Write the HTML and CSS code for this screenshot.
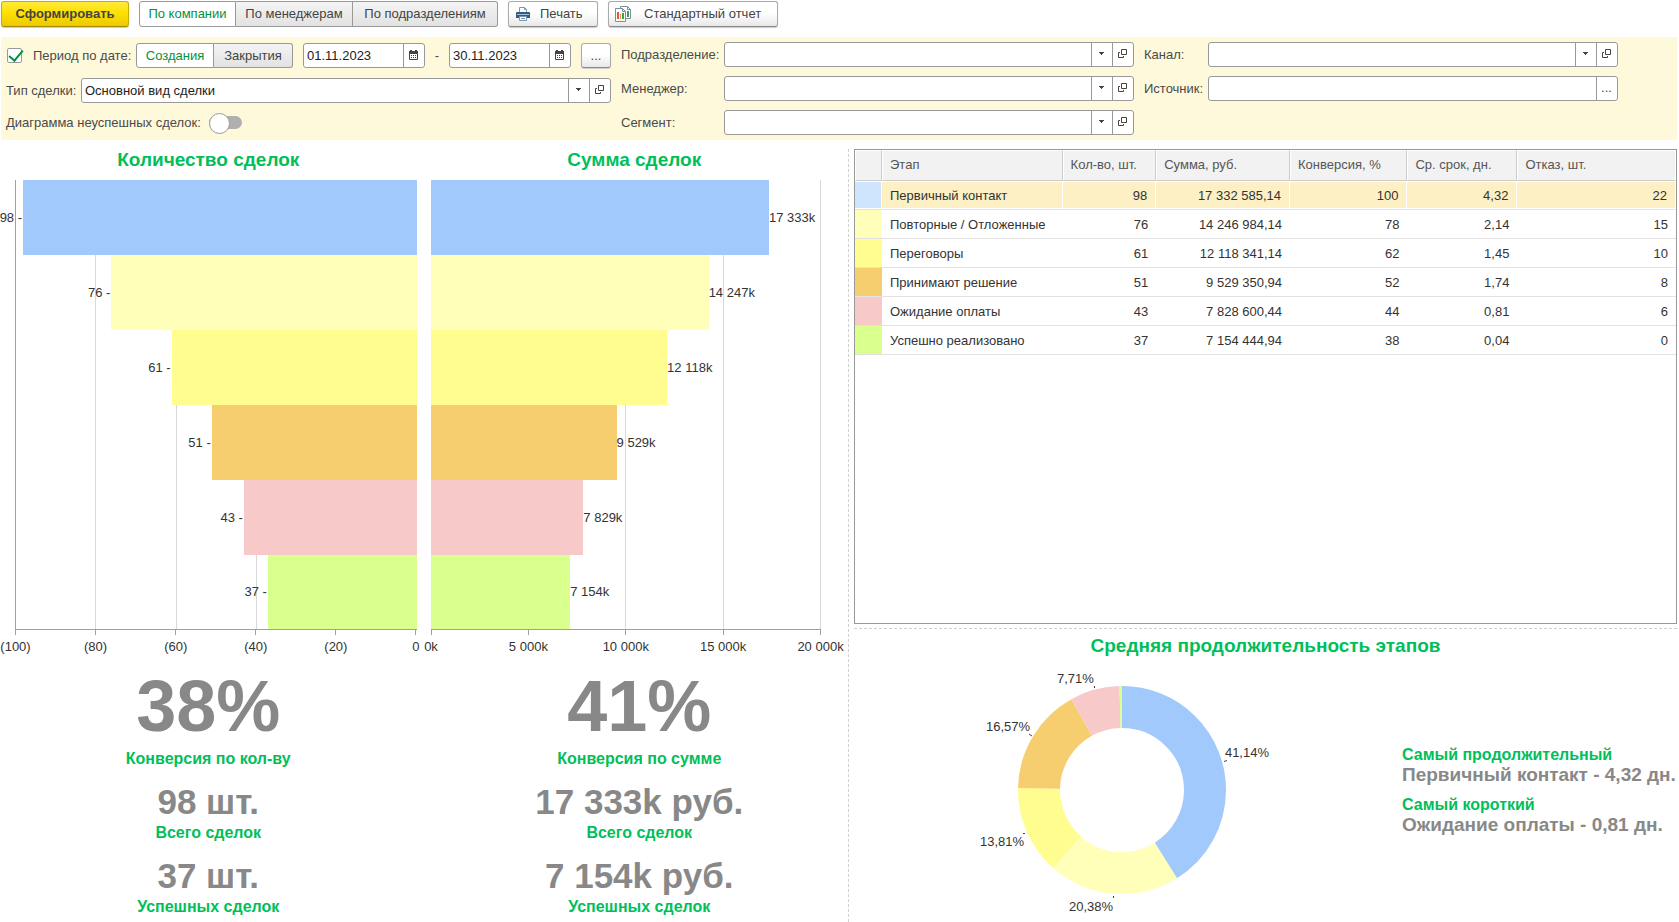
FILE: index.html
```html
<!DOCTYPE html>
<html lang="ru">
<head>
<meta charset="utf-8">
<title>Воронка продаж</title>
<link rel="stylesheet" href="styles.css">
</head>
<body>
<svg class="defs" aria-hidden="true">
  <symbol id="i-down" viewBox="0 0 5 3"><path d="M0 0h5v1h-1v1h-1v1h-1v-1h-1v-1h-1z" fill="#444"/></symbol>
  <symbol id="i-open" viewBox="0 0 9 9"><path d="M3.500 .5h5v5h-5zM2 3.500H.5v5h5V7" fill="none" stroke="#444"/></symbol>
  <symbol id="i-cal" viewBox="0 0 9 10"><path d="M.5 2v7.500h8V2" fill="none" stroke="#444"/><path d="M0 1h9v3H0zM1 0h2v1H1zM6 0h2v1H6zM2 5h1v1H2zM4 5h1v1H4zM6 5h1v1H6zM2 7h1v1H2zM4 7h1v1H4zM6 7h1v1H6z" fill="#444"/></symbol>
</svg>
<header class="toolbar">
  <button class="btn btn-primary" type="button">Сформировать</button>
  <div class="segments" role="group" aria-label="Разрез отчета">
    <button class="seg seg-on seg-company" type="button" aria-pressed="true">По компании</button>
    <button class="seg seg-managers" type="button" aria-pressed="false">По менеджерам</button>
    <button class="seg seg-units" type="button" aria-pressed="false">По подразделениям</button>
  </div>
  <button class="btn btn-print" type="button">
    <svg width="14" height="14" viewBox="0 0 14 14" aria-hidden="true"><path d="M3.500 5V.5h5l2 2V5" fill="#fff" stroke="#7d97b0"/><path d="M8.500 .5v2h2" fill="none" stroke="#7d97b0"/><path d="M1 5h12q1 0 1 1v5H0V6q0-1 1-1z" fill="#2f5b87"/><path d="M1 7h12v1H1z" fill="#a9c0d6"/><path d="M3.500 9.500h7v4h-7z" fill="#fff" stroke="#7d97b0"/><path d="M5 11h4v1H5z" fill="#7d97b0"/></svg>
    Печать
  </button>
  <button class="btn btn-report" type="button">
    <svg width="16" height="16" viewBox="0 0 16 16" aria-hidden="true"><path d="M5.500 .5h7l3 3v9h-10z" fill="#fff" stroke="#7c8f9d"/><path d="M12.500 .5v3h3" fill="none" stroke="#7c8f9d"/><path d="M12 5h2v6h-2z" fill="#3ca04c"/><path d="M.5 2.500h7l3 3v10H.5z" fill="#fff" stroke="#7c8f9d"/><path d="M7.500 2.500v3h3" fill="none" stroke="#7c8f9d"/><path d="M2 6h2v7H2z" fill="#d9534a"/><path d="M5 8h1v5H5z" fill="#e8923c"/><path d="M7 7h2v6H7z" fill="#3ca04c"/></svg>
    Стандартный отчет
  </button>
</header>

<form class="filters">
  <div class="filters-main">
    <div class="row">
      <input class="check" type="checkbox" id="period" checked>
      <label class="period-label" for="period">Период по дате:</label>
      <div class="segments" role="group" aria-label="Дата">
        <button class="seg seg-on seg-created" type="button" aria-pressed="true">Создания</button>
        <button class="seg seg-closed" type="button" aria-pressed="false">Закрытия</button>
      </div>
      <div class="field field-date">
        <input type="text" value="01.11.2023" aria-label="Начало периода">
        <button type="button" aria-label="Календарь"><svg width="9" height="10"><use href="#i-cal"/></svg></button>
      </div>
      <span class="dash">-</span>
      <div class="field field-date">
        <input type="text" value="30.11.2023" aria-label="Конец периода">
        <button type="button" aria-label="Календарь"><svg width="9" height="10"><use href="#i-cal"/></svg></button>
      </div>
      <button class="btn btn-more" type="button" aria-label="Выбрать период">...</button>
    </div>
    <div class="row">
      <label class="type-label" for="type">Тип сделки:</label>
      <div class="field">
        <input type="text" id="type" value="Основной вид сделки">
        <button type="button" aria-label="Список"><svg width="5" height="3"><use href="#i-down"/></svg></button>
        <button type="button" aria-label="Открыть"><svg width="9" height="9"><use href="#i-open"/></svg></button>
      </div>
    </div>
    <div class="row row-switch">
      <label for="failed">Диаграмма неуспешных сделок:</label>
      <input class="switch" type="checkbox" role="switch" id="failed">
    </div>
  </div>
  <div class="filters-side filters-org">
    <label for="unit">Подразделение:</label>
    <div class="field">
      <input type="text" id="unit">
      <button type="button" aria-label="Список"><svg width="5" height="3"><use href="#i-down"/></svg></button>
      <button type="button" aria-label="Открыть"><svg width="9" height="9"><use href="#i-open"/></svg></button>
    </div>
    <label for="manager">Менеджер:</label>
    <div class="field">
      <input type="text" id="manager">
      <button type="button" aria-label="Список"><svg width="5" height="3"><use href="#i-down"/></svg></button>
      <button type="button" aria-label="Открыть"><svg width="9" height="9"><use href="#i-open"/></svg></button>
    </div>
    <label for="segment">Сегмент:</label>
    <div class="field">
      <input type="text" id="segment">
      <button type="button" aria-label="Список"><svg width="5" height="3"><use href="#i-down"/></svg></button>
      <button type="button" aria-label="Открыть"><svg width="9" height="9"><use href="#i-open"/></svg></button>
    </div>
  </div>
  <div class="filters-side filters-source">
    <label for="channel">Канал:</label>
    <div class="field">
      <input type="text" id="channel">
      <button type="button" aria-label="Список"><svg width="5" height="3"><use href="#i-down"/></svg></button>
      <button type="button" aria-label="Открыть"><svg width="9" height="9"><use href="#i-open"/></svg></button>
    </div>
    <label for="source">Источник:</label>
    <div class="field">
      <input type="text" id="source">
      <button type="button" aria-label="Выбрать">...</button>
    </div>
  </div>
</form>

<main class="report">
  <section class="funnels">
    <div class="funnel funnel-count">
      <h2 class="title">Количество сделок</h2>
      <div class="plot">
        <div class="grid"><i></i><i></i><i></i><i></i><i></i></div>
        <div class="bar-row"><span>98 -</span><b class="bar c-blue" style="width:98%"></b></div>
        <div class="bar-row"><span>76 -</span><b class="bar c-cream" style="width:76%"></b></div>
        <div class="bar-row"><span>61 -</span><b class="bar c-yellow" style="width:61%"></b></div>
        <div class="bar-row"><span>51 -</span><b class="bar c-orange" style="width:51%"></b></div>
        <div class="bar-row"><span>43 -</span><b class="bar c-pink" style="width:43%"></b></div>
        <div class="bar-row"><span>37 -</span><b class="bar c-green" style="width:37%"></b></div>
      </div>
      <div class="axis"><span>(100)</span><span>(80)</span><span>(60)</span><span>(40)</span><span>(20)</span><span>0</span></div>
      <dl class="kpis">
        <div class="kpi kpi-big"><dd>38%</dd><dt>Конверсия по кол-ву</dt></div>
        <div class="kpi"><dd>98 шт.</dd><dt>Всего сделок</dt></div>
        <div class="kpi"><dd>37 шт.</dd><dt>Успешных сделок</dt></div>
      </dl>
    </div>
    <div class="funnel funnel-sum">
      <h2 class="title">Сумма сделок</h2>
      <div class="plot">
        <div class="grid"><i></i><i></i><i></i><i></i></div>
        <div class="bar-row"><b class="bar c-blue" style="width:86.66%"></b><span>17 333k</span></div>
        <div class="bar-row"><b class="bar c-cream" style="width:71.23%"></b><span>14 247k</span></div>
        <div class="bar-row"><b class="bar c-yellow" style="width:60.59%"></b><span>12 118k</span></div>
        <div class="bar-row"><b class="bar c-orange" style="width:47.65%"></b><span>9 529k</span></div>
        <div class="bar-row"><b class="bar c-pink" style="width:39.14%"></b><span>7 829k</span></div>
        <div class="bar-row"><b class="bar c-green" style="width:35.77%"></b><span>7 154k</span></div>
      </div>
      <div class="axis"><span>0k</span><span>5 000k</span><span>10 000k</span><span>15 000k</span><span>20 000k</span></div>
      <dl class="kpis">
        <div class="kpi kpi-big"><dd>41%</dd><dt>Конверсия по сумме</dt></div>
        <div class="kpi"><dd>17 333k руб.</dd><dt>Всего сделок</dt></div>
        <div class="kpi"><dd>7 154k руб.</dd><dt>Успешных сделок</dt></div>
      </dl>
    </div>
  </section>

  <section class="details">
    <div class="table-box">
      <table class="stages">
        <colgroup><col class="w-mark"><col class="w-stage"><col class="w-count"><col class="w-sum"><col class="w-conv"><col class="w-term"><col></colgroup>
        <thead>
          <tr><th></th><th>Этап</th><th>Кол-во, шт.</th><th>Сумма, руб.</th><th>Конверсия, %</th><th>Ср. срок, дн.</th><th>Отказ, шт.</th></tr>
        </thead>
        <tbody>
          <tr class="current"><td class="c-blue"></td><td>Первичный контакт</td><td>98</td><td>17 332 585,14</td><td>100</td><td>4,32</td><td>22</td></tr>
          <tr><td class="c-cream"></td><td>Повторные / Отложенные</td><td>76</td><td>14 246 984,14</td><td>78</td><td>2,14</td><td>15</td></tr>
          <tr><td class="c-yellow"></td><td>Переговоры</td><td>61</td><td>12 118 341,14</td><td>62</td><td>1,45</td><td>10</td></tr>
          <tr><td class="c-orange"></td><td>Принимают решение</td><td>51</td><td>9 529 350,94</td><td>52</td><td>1,74</td><td>8</td></tr>
          <tr><td class="c-pink"></td><td>Ожидание оплаты</td><td>43</td><td>7 828 600,44</td><td>44</td><td>0,81</td><td>6</td></tr>
          <tr><td class="c-green"></td><td>Успешно реализовано</td><td>37</td><td>7 154 444,94</td><td>38</td><td>0,04</td><td>0</td></tr>
        </tbody>
      </table>
    </div>
    <div class="duration">
      <h2 class="title">Средняя продолжительность этапов</h2>
      <div class="duration-body">
        <div class="donut">
          <svg width="300" height="250" viewBox="0 0 300 250" role="img" aria-label="Доли этапов">
            <g fill="none" stroke-width="42" transform="rotate(-90 150 124)">
              <circle cx="150" cy="124" r="83" pathLength="100" stroke="#a2c9fb" stroke-dasharray="41.14 100"/>
              <circle cx="150" cy="124" r="83" pathLength="100" stroke="#ffffba" stroke-dasharray="20.38 100" stroke-dashoffset="-41.14"/>
              <circle cx="150" cy="124" r="83" pathLength="100" stroke="#fffd8f" stroke-dasharray="13.81 100" stroke-dashoffset="-61.52"/>
              <circle cx="150" cy="124" r="83" pathLength="100" stroke="#f7ce6f" stroke-dasharray="16.57 100" stroke-dashoffset="-75.33"/>
              <circle cx="150" cy="124" r="83" pathLength="100" stroke="#f7c9c9" stroke-dasharray="7.71 100" stroke-dashoffset="-91.9"/>
              <circle cx="150" cy="124" r="83" pathLength="100" stroke="#d9ff8c" stroke-dasharray="0.39 100" stroke-dashoffset="-99.61"/>
            </g>
            <path d="M122.500 20v2M57 68l3 2M51 167.500h2M141.500 230v2M252 95.500l3-1" fill="none" stroke="#444"/>
            <g class="donut-text">
              <text x="297" y="91" text-anchor="end">41,14%</text>
              <text x="97" y="245">20,38%</text>
              <text x="8" y="180">13,81%</text>
              <text x="14" y="65">16,57%</text>
              <text x="85" y="17">7,71%</text>
            </g>
          </svg>
        </div>
        <dl class="notes">
          <div><dt>Самый продолжительный</dt><dd>Первичный контакт - 4,32 дн.</dd></div>
          <div><dt>Самый короткий</dt><dd>Ожидание оплаты - 0,81 дн.</dd></div>
        </dl>
      </div>
    </div>
  </section>
</main>
</body>
</html>
```
FILE: styles.css
```css
* { box-sizing: border-box; }
body { margin: 0; min-height: 100vh; display: flex; flex-direction: column; background: #fff; color: #333; font: 13px/16px "Liberation Sans", Arial, sans-serif; }
button, input { font: inherit; color: inherit; margin: 0; }
.defs { display: none; }
h2, dl, dd { margin: 0; }

.toolbar { display: flex; gap: 10px; padding: 1px 1px 10px; color: #444; }
.btn { height: 26px; display: flex; align-items: center; justify-content: center; padding: 0; border: 1px solid #aaa; border-bottom-color: #888; border-radius: 3px; background: linear-gradient(#fff, #fff 45%, #e8e8e8); box-shadow: 0 1px 1px #ccc; }
.btn-primary { width: 128px; font-weight: bold; background: linear-gradient(#ffea3c, #ffe000 45%, #ecc900); border-color: #c8ac00; border-bottom-color: #a08900; }
.btn-print { width: 90px; gap: 10px; padding-left: 7px; justify-content: flex-start; }
.btn-report { width: 170px; gap: 13px; padding-left: 6px; justify-content: flex-start; }
.btn-more { width: 30px; height: 25px; }
.segments { display: flex; }
.seg { height: 25px; padding: 0; border: 1px solid #999; border-left-width: 0; background: linear-gradient(#f4f4f4, #e2e2e2); color: #444; }
.seg:first-child { border-left-width: 1px; border-radius: 3px 0 0 3px; }
.seg:last-child { border-radius: 0 3px 3px 0; }
.seg.seg-on { background: #fff; color: #00913f; }
.toolbar .seg { height: 26px; }
.seg-company { width: 97px; }
.seg-managers { width: 117px; }
.seg-units { width: 145px; }
.seg-created { width: 78px; }
.seg-closed { width: 79px; }

.filters { display: grid; grid-template-columns: 605fr 513fr 474fr; gap: 10px; margin: 0 2px 0 1px; padding: 5px 59px 5px 5px; background: #fef9da; color: #4a4a4a; }
.filters-main { display: flex; flex-direction: column; gap: 10px; padding-top: 1px; }
.row { display: flex; align-items: center; }
.filters-side { display: grid; grid-auto-rows: 25px; row-gap: 9px; align-items: center; align-content: start; }
.filters-org { grid-template-columns: 103px 1fr; }
.filters-source { grid-template-columns: 64px 1fr; }
.field { flex: 1; display: flex; height: 25px; border: 1px solid #999; border-radius: 3px; background: #fff; overflow: hidden; }
.field input { flex: 1; min-width: 0; width: 0; padding: 0 3px; border: 0; background: none; color: #222; outline: 0; font-size: 13px; }
.field button { width: 21px; padding: 0 1px 2px 0; border: 0; border-left: 1px solid #999; background: none; display: flex; align-items: center; justify-content: center; }
.field-date { flex: none; width: 122px; }
.check { appearance: none; width: 15px; height: 15px; margin-left: 1px; border: 1px solid #999; border-radius: 2px; background: #fff; position: relative; }
.check:checked::after { content: ""; position: absolute; left: 4px; top: -2px; width: 6px; height: 12px; border: solid #00913f; border-width: 0 2px 2px 0; transform: rotate(40deg); }
.period-label { width: 103px; margin-left: 11px; }
.row .segments { margin-right: 10px; }
.dash { width: 24px; text-align: center; }
.row .btn-more { margin-left: auto; }
.type-label { width: 75px; }
.row-switch { height: 19px; gap: 8px; }
.switch { appearance: none; position: relative; width: 33px; height: 13px; border-radius: 7px; background: #b0b0b0; }
.switch::before { content: ""; position: absolute; left: 0; top: -3px; width: 19px; height: 19px; border: 1px solid #999; border-radius: 50%; background: #fff; }

.report { flex: 1; display: grid; grid-template-columns: 849fr 830fr; }
.title { color: #00bf5a; font-size: 19px; line-height: 22px; text-align: center; }
.funnels { display: grid; grid-template-columns: 1fr 1fr; gap: 13px; margin-top: 9px; border-right: 1px dashed #d0d0d0; }
.funnel-count { padding-right: 1px; }
.funnel-count .plot, .funnel-count .axis { margin-left: 15px; }
.funnel-sum .plot, .funnel-sum .axis { margin-right: 27px; }
.funnel-sum .title { padding-right: 10px; }
.plot { position: relative; margin-top: 9px; border-bottom: 1px solid #a0a0a0; }
.grid { position: absolute; inset: 0; display: flex; }
.grid i { flex: 1; border-left: 1px solid #d8d8d8; }
.funnel-count .grid i:first-child { border-color: #a0a0a0; }
.funnel-sum .grid { border-right: 1px solid #d8d8d8; }
.bar-row { position: relative; display: flex; align-items: center; height: 75px; white-space: nowrap; }
.bar-row:last-child { height: 74px; }
.bar-row span { flex: none; }
.bar { flex: none; height: 100%; }
.funnel-count .bar-row { justify-content: flex-end; gap: 1px; }
.axis { display: flex; justify-content: space-between; }
.axis span { width: 1px; display: flex; flex-direction: column; align-items: center; white-space: nowrap; }
.axis span::before { content: ""; width: 1px; height: 5px; margin-bottom: 4px; background: #a0a0a0; }
.c-blue { background: #a2c9fb; }
.c-cream { background: #ffffba; }
.c-yellow { background: #fffd8f; }
.c-orange { background: #f7ce6f; }
.c-pink { background: #f7c9c9; }
.c-green { background: #d9ff8c; }

.kpis { display: flex; flex-direction: column; gap: 15px; margin-top: 11px; text-align: center; font-weight: bold; }
.kpi { display: flex; flex-direction: column; gap: 3px; }
.kpi dt { color: #00bf5a; font-size: 16px; line-height: 20px; }
.kpi dd { color: #888; font-size: 35px; line-height: 36px; }
.kpi-big dd { font-size: 72px; line-height: 80px; }

.details { display: flex; flex-direction: column; margin: 9px 2px 0 5px; }
.table-box { flex: 1; border: 1px solid #999; }
.stages { width: 100%; table-layout: fixed; border-collapse: separate; border-spacing: 0; }
.w-mark { width: 27px; }
.w-stage { width: 22%; }
.w-count { width: 11.4%; }
.w-sum { width: 16.3%; }
.w-conv { width: 14.3%; }
.w-term { width: 13.4%; }
.stages th { height: 31px; padding: 0 7px 2px; border: 1px solid #fff; border-right-color: #ccc; border-bottom-color: #ccc; background: #f2f2f2; color: #555; font-weight: normal; text-align: left; }
.stages th:last-child { border-right-color: #fff; }
.stages td { height: 29px; padding: 1px 8px 0; border-bottom: 1px solid #e2e2e2; text-align: right; }
.stages td:nth-child(2) { text-align: left; }
.stages .current td { background: #fdf0c4; border-right: 1px solid #fff; box-shadow: inset 0 1px #fff, inset 0 -1px #fff; }
.stages .current .c-blue { background: #cfe4fd; }

.duration { margin-top: 4px; padding: 6px 0; border-top: 1px dashed #d0d0d0; }
.duration-body { display: flex; align-items: center; gap: 12px; }
.donut { flex: 1; display: flex; justify-content: center; margin-top: 9px; }
.donut-text { fill: #333; }
.notes { display: flex; flex-direction: column; gap: 9px; width: 275px; padding-top: 8px; font-weight: bold; white-space: nowrap; }
.notes dt { color: #00bf5a; font-size: 16px; line-height: 19px; }
.notes dd { color: #888; font-size: 19px; line-height: 22px; }
```
